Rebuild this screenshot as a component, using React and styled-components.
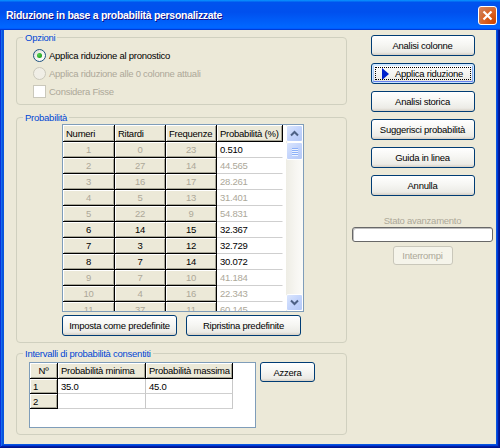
import React from 'react';
import styled, { createGlobalStyle } from 'styled-components';

const FONT = '"Liberation Sans", Arial, sans-serif';

const GlobalStyle = createGlobalStyle`
  html, body {
    margin: 0;
    padding: 0;
    background: #fff;
  }
  body {
    font-family: ${FONT};
    font-size: 9.5px;
    letter-spacing: -0.25px;
    color: #000;
  }
  * {
    box-sizing: border-box;
  }
`;

const Window = styled.div`
  width: 500px;
  height: 448px;
  display: flex;
  flex-direction: column;
  overflow: hidden;
`;

const TitleBar = styled.div`
  height: 30px;
  flex: 0 0 30px;
  display: flex;
  align-items: center;
  justify-content: space-between;
  padding: 0 3px 0 6px;
  background: linear-gradient(
    180deg,
    #0997ff,
    #0053ee 8%,
    #0050ee 40%,
    #0066ff 88%,
    #0066ff 93%,
    #005bff 95%,
    #003dd7 96%,
    #003dd7
  );
`;

const TitleText = styled.div`
  color: #fff;
  font-weight: bold;
  font-size: 10.5px;
  letter-spacing: -0.3px;
  text-shadow: 1px 1px #0f1089;
`;

const CloseButton = styled.div`
  width: 19px;
  height: 19px;
  border: 1px solid #fff;
  border-radius: 3px;
  background: radial-gradient(circle at 90% 90%, #cc4600 0%, #dc6527 55%, #cd7546 70%, #e2835a 100%);
  display: flex;
  align-items: center;
  justify-content: center;
`;

const Frame = styled.div`
  flex: 1;
  display: flex;
  padding: 0 4px 4px 4px;
  background: #0855dd;
  box-shadow: inset -1px -1px #00138c, inset 1px 0 #0831d9, inset -2px -2px #001ea0,
    inset 2px 0 #166aee, inset -3px -3px #003bda, inset 3px 0 #0855dd;
`;

const Client = styled.div`
  flex: 1;
  display: flex;
  gap: 5px;
  padding: 1px 3px 0 12px;
  background: #ece9d8;
`;

const LeftColumn = styled.div`
  width: 331px;
  display: flex;
  flex-direction: column;
`;

const Group = styled.fieldset`
  margin: ${p => p.$top || 0}px 0 0 0;
  padding: 0;
  height: ${p => p.$h}px;
  border: 1px solid #d0d0bf;
  border-radius: 4px;
  min-width: 0;
`;

const Legend = styled.legend`
  color: #0046d5;
  padding: 0 2px;
  margin-left: 6px;
  line-height: 13px;
`;

const GroupBody = styled.div`
  padding: ${p => p.$pad};
`;

const OptionRow = styled.div`
  height: 18px;
  display: flex;
  align-items: center;
  gap: 3px;
  color: ${p => (p.$disabled ? '#aca899' : '#000')};
`;

const Radio = styled.span`
  width: 13px;
  height: 13px;
  border-radius: 50%;
  border: 1px solid ${p => (p.$disabled ? '#cac8bb' : '#1c5180')};
  background: ${p =>
    p.$disabled ? '#f0eee6' : 'linear-gradient(135deg, #dcdbd5 0%, #f4f4f0 50%, #ffffff 100%)'};
  display: flex;
  align-items: center;
  justify-content: center;
`;

const RadioDot = styled.span`
  width: 5px;
  height: 5px;
  border-radius: 50%;
  background: radial-gradient(circle at 35% 35%, #55d451 0%, #21a121 70%, #1a8a1a 100%);
`;

const CheckBox = styled.span`
  width: 13px;
  height: 13px;
  border: 1px solid #cac8bb;
  background: #fff;
`;

const GridBox = styled.div`
  width: ${p => p.$w}px;
  height: ${p => p.$h}px;
  flex: 0 0 auto;
  display: flex;
  border: 1px solid #7f9db9;
  background: #fff;
  overflow: hidden;
`;

const GridArea = styled.div`
  flex: 1;
  display: grid;
  grid-template-columns: ${p => p.$cols};
  grid-template-rows: ${p => p.$head}px;
  grid-auto-rows: ${p => p.$row}px;
  align-content: start;
  overflow: hidden;
`;

const Cell = styled.div`
  display: flex;
  align-items: center;
  justify-content: ${p => (p.$center ? 'center' : 'flex-start')};
  padding: 0 3px;
  white-space: nowrap;
  overflow: hidden;
  background: ${p => (p.$fixed ? '#ece9d8' : '#fff')};
  color: ${p => (p.$dim ? '#aca899' : '#000')};
  border-right: 1px solid ${p => (p.$fixed ? '#000' : p.$line ? '#c8c8c8' : 'transparent')};
  border-bottom: 1px solid ${p => (p.$fixed ? '#000' : '#cfcfcf')};
  box-shadow: ${p => (p.$fixed ? 'inset 1px 1px 0 #fff, inset -1px -1px 0 #a7a596' : 'none')};
`;

const ScrollBar = styled.div`
  width: 17px;
  margin-left: 3px;
  display: flex;
  flex-direction: column;
  background: linear-gradient(90deg, #eeede5, #f7f6f2 60%, #fbfbf8);
`;

const ScrollButton = styled.div`
  height: 17px;
  flex: 0 0 17px;
  border: 1px solid #fff;
  border-radius: 2px;
  background: linear-gradient(135deg, #dbe6fd 0%, #c3d4fc 50%, #b4c8f6 100%);
  display: flex;
  align-items: center;
  justify-content: center;
`;

const ScrollTrack = styled.div`
  flex: 1;
  display: flex;
  flex-direction: column;
`;

const Thumb = styled(ScrollButton)`
  height: 18px;
  flex: 0 0 18px;
  flex-direction: column;
  gap: 1px;
`;

const Grip = styled.span`
  width: 6px;
  height: 1px;
  background: #8cb0f8;
  box-shadow: 0 1px 0 #eef4fe;
`;

const ButtonRow = styled.div`
  display: flex;
  gap: 9px;
  margin-top: 3px;
`;

const Button = styled.button`
  width: ${p => p.$w}px;
  height: ${p => p.$h || 21}px;
  flex: 0 0 auto;
  padding: 0;
  font-family: ${FONT};
  font-size: 9.5px;
  letter-spacing: -0.25px;
  color: ${p => (p.disabled ? '#aca899' : '#000')};
  border: 1px solid ${p => (p.disabled ? '#c9c7ba' : '#003c74')};
  border-radius: 3px;
  background: ${p =>
    p.disabled
      ? '#f5f4ea'
      : 'linear-gradient(180deg, #ffffff 0%, #f6f6f3 45%, #ecebe6 85%, #d6d0c5 100%)'};
  box-shadow: ${p =>
    p.$focus
      ? 'inset 0 0 0 1px #cee7ff, inset 0 -2px 0 #6982ee, inset 0 2px 0 #cee7ff, inset 2px 0 #adcbf7, inset -2px 0 #89adf1'
      : 'none'};
  display: flex;
  align-items: center;
  justify-content: center;
  gap: 6px;
`;

const FocusButton = styled(Button)`
  position: relative;
`;

const FocusRing = styled.span`
  position: absolute;
  inset: 3px;
  border: 1px dotted #000;
  pointer-events: none;
`;

const Triangle = styled.span`
  width: 0;
  height: 0;
  border-top: 6px solid transparent;
  border-bottom: 6px solid transparent;
  border-left: 7px solid #0022cc;
`;

const IntervalRow = styled.div`
  display: flex;
  gap: 4px;
  align-items: flex-start;
`;

const RightColumn = styled.div`
  width: 141px;
  display: flex;
  flex-direction: column;
  align-items: center;
  padding-top: 4px;
`;

const ActionList = styled.div`
  display: flex;
  flex-direction: column;
  gap: 7px;
`;

const StatusLabel = styled.div`
  margin-top: 18px;
  line-height: 13px;
  color: #aca899;
`;

const Progress = styled.div`
  width: 141px;
  height: 15px;
  border: 1px solid #686868;
  border-radius: 3px;
  background: #fff;
  box-shadow: inset 1px 1px 0 #bebebe;
`;

const StopWrap = styled.div`
  margin-top: 4px;
`;

const rows = [
  ['1', '0', '23', '0.510', true, false],
  ['2', '27', '14', '44.565', true, true],
  ['3', '16', '17', '28.261', true, true],
  ['4', '5', '13', '31.401', true, true],
  ['5', '22', '9', '54.831', true, true],
  ['6', '14', '15', '32.367', false, false],
  ['7', '3', '12', '32.729', false, false],
  ['8', '7', '14', '30.072', false, false],
  ['9', '7', '10', '41.184', true, true],
  ['10', '4', '16', '22.343', true, true],
  ['11', '37', '11', '60.145', true, true],
];

const Chevron = ({ up }) => (
  <svg width="9" height="7" viewBox="0 0 9 7">
    <path
      d={up ? 'M1 5.5 L4.5 2 L8 5.5' : 'M1 1.5 L4.5 5 L8 1.5'}
      fill="none"
      stroke="#4d6185"
      strokeWidth="2"
    />
  </svg>
);

const App = () => {
  return (
    <>
      <GlobalStyle />
      <Window>
        <TitleBar>
          <TitleText>Riduzione in base a probabilità personalizzate</TitleText>
          <CloseButton>
            <svg width="11" height="11" viewBox="0 0 11 11">
              <path d="M1.5 1.5 L9.5 9.5 M9.5 1.5 L1.5 9.5" stroke="#fff" strokeWidth="2.2" />
            </svg>
          </CloseButton>
        </TitleBar>
        <Frame>
          <Client>
            <LeftColumn>
              <Group $h={74}>
                <Legend>Opzioni</Legend>
                <GroupBody $pad="2px 0 0 16px">
                  <OptionRow>
                    <Radio>
                      <RadioDot />
                    </Radio>
                    Applica riduzione al pronostico
                  </OptionRow>
                  <OptionRow $disabled>
                    <Radio $disabled />
                    Applica riduzione alle 0 colonne attuali
                  </OptionRow>
                  <OptionRow $disabled>
                    <CheckBox />
                    Considera Fisse
                  </OptionRow>
                </GroupBody>
              </Group>

              <Group $top={6} $h={232}>
                <Legend>Probabilità</Legend>
                <GroupBody $pad="0 0 0 45px">
                  <GridBox $w={242} $h={188}>
                    <GridArea $cols="52px 51px 51px 66px" $head={17} $row={16}>
                      <Cell $fixed>Numeri</Cell>
                      <Cell $fixed>Ritardi</Cell>
                      <Cell $fixed>Frequenze</Cell>
                      <Cell $fixed>Probabilità (%)</Cell>
                      {rows.map(([n, r, f, p, dimFixed, dimProb]) => (
                        <React.Fragment key={n}>
                          <Cell $fixed $center $dim={dimFixed}>{n}</Cell>
                          <Cell $fixed $center $dim={dimFixed}>{r}</Cell>
                          <Cell $fixed $center $dim={dimFixed}>{f}</Cell>
                          <Cell $dim={dimProb}>{p}</Cell>
                        </React.Fragment>
                      ))}
                    </GridArea>
                    <ScrollBar>
                      <ScrollButton>
                        <Chevron up />
                      </ScrollButton>
                      <ScrollTrack>
                        <Thumb>
                          <Grip />
                          <Grip />
                          <Grip />
                          <Grip />
                        </Thumb>
                      </ScrollTrack>
                      <ScrollButton>
                        <Chevron />
                      </ScrollButton>
                    </ScrollBar>
                  </GridBox>
                  <ButtonRow>
                    <Button $w={115}>Imposta come predefinite</Button>
                    <Button $w={115}>Ripristina predefinite</Button>
                  </ButtonRow>
                </GroupBody>
              </Group>

              <Group $top={4} $h={88}>
                <Legend>Intervalli di probabilità consentiti</Legend>
                <GroupBody $pad="2px 0 0 12px">
                  <IntervalRow>
                    <GridBox $w={227} $h={66}>
                      <GridArea $cols="28px 88px 87px" $head={16} $row={15}>
                        <Cell $fixed $center>Nº</Cell>
                        <Cell $fixed>Probabilità minima</Cell>
                        <Cell $fixed>Probabilità massima</Cell>
                        <Cell $fixed>1</Cell>
                        <Cell $line>35.0</Cell>
                        <Cell $line>45.0</Cell>
                        <Cell $fixed>2</Cell>
                        <Cell $line />
                        <Cell $line />
                      </GridArea>
                    </GridBox>
                    <Button $w={55} $h={20}>Azzera</Button>
                  </IntervalRow>
                </GroupBody>
              </Group>
            </LeftColumn>

            <RightColumn>
              <ActionList>
                <Button $w={104}>Analisi colonne</Button>
                <FocusButton $w={104} $focus>
                  <Triangle />
                  Applica riduzione
                  <FocusRing />
                </FocusButton>
                <Button $w={104}>Analisi storica</Button>
                <Button $w={104}>Suggerisci probabilità</Button>
                <Button $w={104}>Guida in linea</Button>
                <Button $w={104}>Annulla</Button>
              </ActionList>
              <StatusLabel>Stato avanzamento</StatusLabel>
              <Progress />
              <StopWrap>
                <Button $w={60} $h={19} disabled>
                  Interrompi
                </Button>
              </StopWrap>
            </RightColumn>
          </Client>
        </Frame>
      </Window>
    </>
  );
};

export default App;
